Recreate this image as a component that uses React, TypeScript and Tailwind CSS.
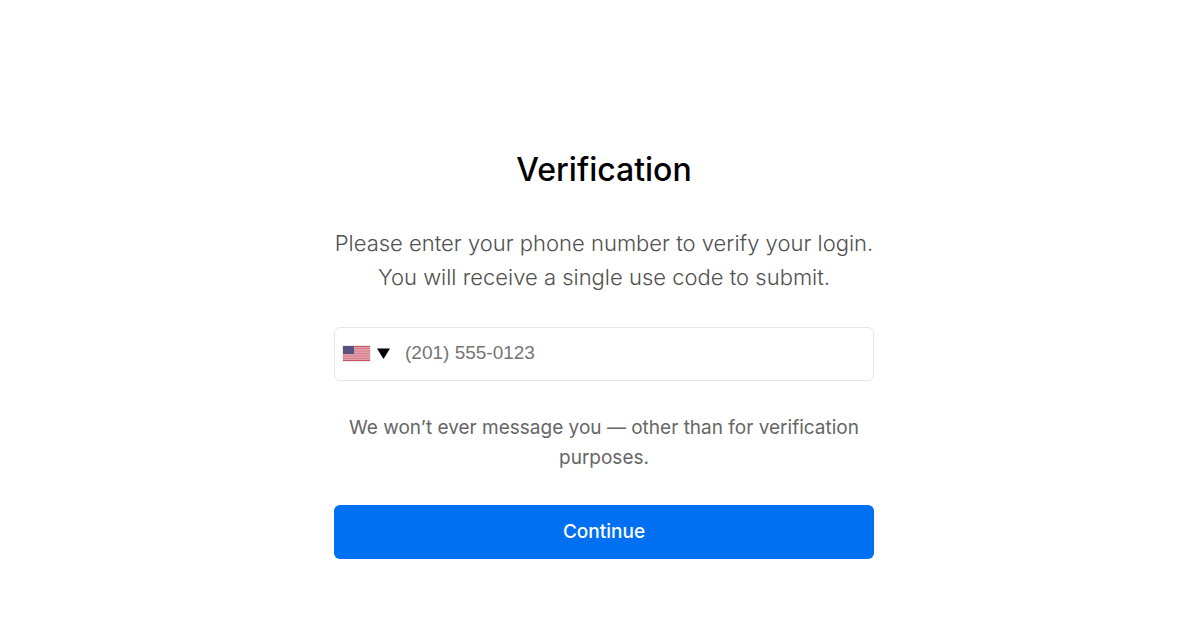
export default function App() {
  return (
    <main className="flex min-h-screen justify-center bg-white px-4 pt-[148px] font-['Inter',sans-serif]">
      <form className="ml-4 flex w-full max-w-[540px] flex-col text-center" onSubmit={(e) => e.preventDefault()}>
        <h1 className="text-[32px] font-medium leading-[44px] text-black">Verification</h1>
        <p className="mt-[34px] text-[22px] font-light leading-[34px] text-[#505050]">
          Please enter your phone number to verify your login.
          <br />
          You will receive a single use code to submit.
        </p>
        <div className="mt-[33px] flex h-[54px] items-center rounded-md border border-[#e6e6e6] bg-white pb-[2px]">
          <button type="button" aria-label="Country: United States" className="flex items-center gap-[6px] pl-[7px]">
            <svg width="29" height="17" viewBox="0 0 29 17" aria-hidden="true">
              <rect width="29" height="17" fill="#e9e9e9" />
              <rect x="1" y="1" width="27" height="15" fill="#e2a0a9" />
              <path d="M1 1.5h27M1 15.5h27" stroke="#cb5565" />
              <path d="M1 3.5h27M1 6h27M1 8.5h27M1 11h27M1 13.5h27" stroke="#d57e8b" />
              <rect x="1" y="1" width="11" height="8" fill="#58527f" />
            </svg>
            <svg width="14" height="12" viewBox="0 0 14 12" aria-hidden="true">
              <path d="M0 1.5h13L6.5 12z" fill="#000" />
            </svg>
          </button>
          <input
            type="tel"
            aria-label="Phone number"
            placeholder="(201) 555-0123"
            className="h-full min-w-0 flex-1 bg-transparent pl-[14px] pr-4 font-['Liberation_Sans',Arial,sans-serif] text-[19px] text-black outline-none placeholder:text-[#757575]"
          />
        </div>
        <p className="mt-8 text-[19px] font-normal leading-[30px] text-[#666666]">
          We won’t ever message you — other than for verification purposes.
        </p>
        <button type="submit" className="mt-8 h-[54px] rounded-md bg-[#0070f3] text-[19px] font-medium text-white">
          Continue
        </button>
      </form>
    </main>
  );
}
